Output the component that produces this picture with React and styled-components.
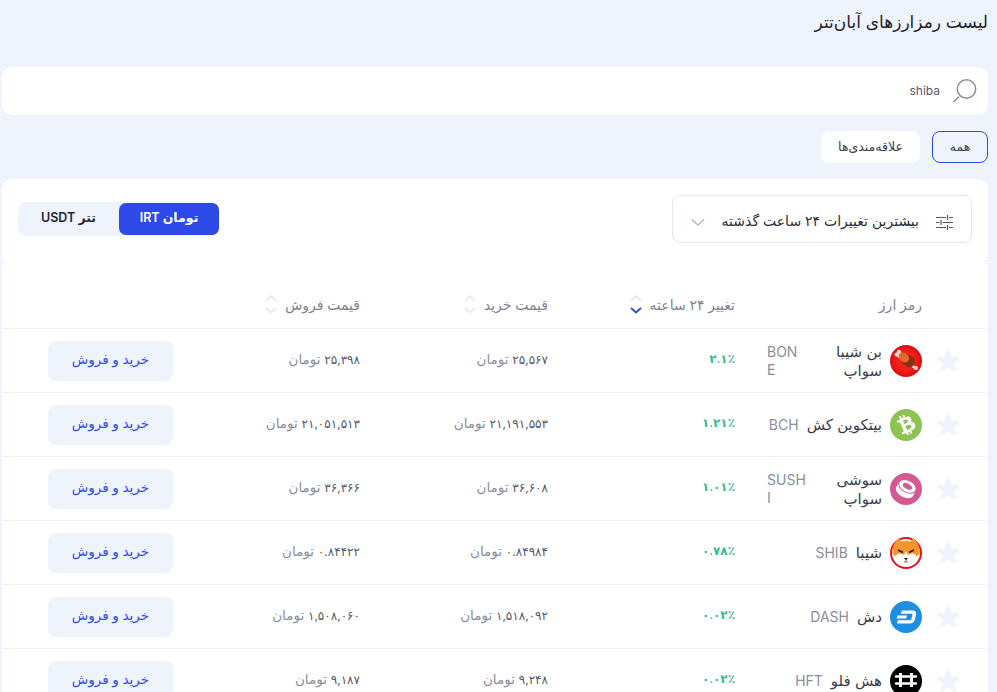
import React from 'react'
import styled, { createGlobalStyle } from 'styled-components'
import { FaBtc } from 'react-icons/fa'

const GlobalStyle = createGlobalStyle`
   html, body {
      margin: 0;
      padding: 0;
      height: 100%;
      overflow: hidden;
      background: #eff3fc;
   }
   body {
      font-family: "Inter", "DejaVu Sans", sans-serif;
      color: #23262f;
   }
`

const Page = styled.div`
   direction: rtl;
   height: 692px;
   overflow: hidden;
   padding: 0 9px 0 2px;
   box-sizing: border-box;
`
const Title = styled.h1`
   margin: 0;
   height: 67px;
   padding-top: 10px;
   box-sizing: border-box;
   font-size: 17px;
   line-height: 24px;
   font-weight: 400;
   color: #1f222b;
`
const SearchBar = styled.div`
   display: flex;
   align-items: center;
   gap: 12px;
   height: 48px;
   padding: 0 10px 0 16px;
   box-sizing: border-box;
   background: #fff;
   border-radius: 10px;

   svg {
      flex: none;
   }
`
const SearchInput = styled.input`
   flex: 1;
   border: 0;
   outline: 0;
   padding: 0;
   margin-bottom: 2px;
   background: transparent;
   direction: rtl;
   font-family: "Inter", sans-serif;
   font-size: 12px;
   color: #555a6b;
`
const Filters = styled.div`
   display: flex;
   gap: 12px;
   margin: 16px 0;
`
const FilterButton = styled.button`
   height: 32px;
   padding: 0 0 2px;
   width: ${(props) => props.$width}px;
   border-radius: 8px;
   border: 1px solid ${(props) => (props.$active ? '#2d4ae8' : '#fff')};
   background: ${(props) => (props.$active ? 'transparent' : '#fff')};
   font-family: inherit;
   font-size: 12.5px;
   color: #3a3e4d;
`
const Toolbar = styled.div`
   display: flex;
   align-items: center;
   justify-content: space-between;
   height: 81px;
   padding: 0 16px 2px;
   box-sizing: border-box;
   background: #fff;
   border-radius: 10px 10px 0 0;
`
const SortSelect = styled.div`
   display: flex;
   align-items: center;
   width: 300px;
   height: 48px;
   padding: 8px 18px 0;
   box-sizing: border-box;
   border: 1px solid #e2e6f2;
   border-radius: 8px;
   font-size: 14px;
   color: #2b2e3a;

   span {
      margin-right: 17px;
      padding-bottom: 4px;
      flex: 1;
   }
`
const Toggle = styled.div`
   display: flex;
   align-items: center;
   width: 201px;
   height: 34px;
   background: #eff3fc;
   border-radius: 8px;
`
const ToggleOption = styled.div`
   display: flex;
   align-items: center;
   justify-content: center;
   width: ${(props) => (props.$active ? 100 : 101)}px;
   height: 32px;
   padding-bottom: 2px;
   box-sizing: border-box;
   border-radius: 7px;
   font-size: 12.5px;
   font-weight: 600;
   background: ${(props) => (props.$active ? '#2d4ae8' : 'transparent')};
   color: ${(props) => (props.$active ? '#fff' : '#23262f')};
`
const Table = styled.div`
   background: #fff;
   border-radius: 6px 6px 0 0;
`
const Row = styled.div`
   display: grid;
   grid-template-columns: 66px 187px 187px 188px 187px 171px;
   align-items: center;
   height: ${(props) => (props.$head ? 69 : 64)}px;
   border-bottom: 1px solid #eef2fb;
   box-sizing: border-box;
`
const HeadCell = styled.div`
   display: flex;
   align-items: center;
   gap: 7px;
   padding-top: 20px;
   font-size: 14px;
   font-weight: 500;
   color: #7f8391;
`
const SortArrows = styled.svg`
   display: block;
   flex: none;
`
const StarCell = styled.div`
   display: flex;
   padding-right: 28px;
`
const NameCell = styled.div`
   display: flex;
   align-items: center;
   gap: 8px;
`
const CoinNames = styled.div`
   display: flex;
   align-items: center;
   gap: 8px;
   width: 115px;
`
const CoinName = styled.div`
   font-size: 15px;
   line-height: 19px;
   color: #3a3d49;
`
const CoinSymbol = styled.div`
   flex: none;
   max-width: ${(props) => props.$maxWidth || 60}px;
   direction: ltr;
   font-size: 14px;
   line-height: 18px;
   color: #8a8e9c;
   word-break: break-all;
`
const Change = styled.div`
   padding-bottom: 4px;
   font-size: 12px;
   font-weight: 600;
   color: #2ec08b;
`
const Price = styled.div`
   padding-bottom: 4px;
   font-size: 13.5px;
   color: #8a8e9c;

   b {
      font-size: 12px;
      font-weight: 400;
      color: #555865;
   }
`
const TradeButton = styled.button`
   width: 125px;
   height: 40px;
   padding: 0 0 4px;
   border: 0;
   border-radius: 8px;
   background: #eff3fc;
   font-family: inherit;
   font-size: 13.5px;
   font-weight: 500;
   color: #2d4ae8;
`
const CoinDisc = styled.div`
   display: flex;
   align-items: center;
   justify-content: center;
   flex: none;
   width: 32px;
   height: 32px;
   border-radius: 50%;
   background: ${(props) => props.$color};

   svg {
      transform: rotate(-24deg);
   }
`

const SearchIcon = () => (
   <svg width="26" height="26" viewBox="0 0 26 26" fill="none" stroke="#8a8e9c">
      <circle cx="14.5" cy="11" r="9.2" strokeWidth="1.5" />
      <path d="M1.5 24 L7 18.6" strokeWidth="1.5" />
   </svg>
)

const SlidersIcon = () => (
   <svg width="17" height="17" viewBox="0 0 17 17" fill="none" stroke="#555865" strokeWidth="1.2">
      <path d="M0 3.5H10M13 3.5H17M11.5 1V6M0 8.5H3.5M6.5 8.5H17M5 6V11M0 13.5H10M13 13.5H17M11.5 11V16" />
   </svg>
)

const ChevronDown = () => (
   <svg width="14" height="9" viewBox="0 0 14 9" fill="none" stroke="#b3b7c4" strokeWidth="1.6">
      <path d="M1 1.5 L7 7 L13 1.5" />
   </svg>
)

const Sorter = ({ active }) => (
   <SortArrows width="14" height="22" viewBox="0 0 14 22" fill="none" strokeWidth="1.3">
      <path d="M2 8 L7 3 L12 8" stroke="#dfe3ee" />
      <path
         d="M2 15 L7 19.5 L12 15"
         stroke={active ? '#2d4ae8' : '#dfe3ee'}
         strokeWidth={active ? 1.8 : 1.3}
      />
   </SortArrows>
)

const Star = () => (
   <svg width="24" height="23" viewBox="0 0 24 23">
      <path
         fill="#eff3fc"
         d="M12 0.5 L15.4 8 L23.6 8.8 L17.4 14.2 L19.2 22.3 L12 18.1 L4.8 22.3 L6.6 14.2 L0.4 8.8 L8.6 8 Z"
         stroke="#eff3fc"
         strokeLinejoin="round"
      />
   </svg>
)

const BoneCoin = () => (
   <svg width="32" height="32" viewBox="0 0 32 32">
      <defs>
         <radialGradient id="boneBg" cx="50%" cy="50%" r="50%">
            <stop offset="55%" stopColor="#f5201c" />
            <stop offset="100%" stopColor="#d80f0f" />
         </radialGradient>
      </defs>
      <circle cx="16" cy="16" r="16" fill="url(#boneBg)" />
      <path d="M7 10 L25 23" stroke="#f2e4dc" strokeWidth="2.4" />
      <circle cx="9" cy="7" r="2.2" fill="#f2e4dc" />
      <circle cx="6.5" cy="9.5" r="2" fill="#f2e4dc" />
      <circle cx="26" cy="23" r="2" fill="#f2e4dc" />
      <path d="M10 13 L15 7.5 L24.5 13 Q26 17 22.5 21.5 Q19 23 17 22 L11 17 Z" fill="#8a2e14" />
      <ellipse cx="14" cy="12.5" rx="4.6" ry="5.6" transform="rotate(-50 14 12.5)" fill="#e8672f" />
   </svg>
)

const BchCoin = () => (
   <CoinDisc $color="#8dc351">
      <FaBtc size={21} color="#fff" />
   </CoinDisc>
)

const SushiCoin = () => (
   <svg width="32" height="32" viewBox="0 0 32 32">
      <circle cx="16" cy="16" r="16" fill="#d65892" />
      <g transform="rotate(28 16 16)">
         <path d="M6.5 13 V19 C6.5 22 11 24.5 16 24.5 C21 24.5 25.5 22 25.5 19 V13 Z" fill="#fff" />
         <ellipse cx="16" cy="13" rx="9.5" ry="6" fill="#fff" stroke="#d65892" strokeWidth="1" />
         <ellipse cx="16" cy="13" rx="5" ry="2.6" fill="#d65892" />
      </g>
   </svg>
)

const ShibCoin = () => (
   <svg width="32" height="32" viewBox="0 0 32 32">
      <circle cx="16" cy="16" r="15" fill="#fff" stroke="#e8101a" strokeWidth="2" />
      <path d="M2.5 17 C2 9 5 3 9 1.5 L11.5 4.5 Q16 3 20.5 4.5 L23 1.5 C27 3 30 9 29.5 17 L24 21 H8 Z" fill="#f5962c" />
      <path d="M6 18 Q10 15 14 18 L16 14 L18 18 Q22 15 26 18 Q25 27 16 29.5 Q7 27 6 18 Z" fill="#fff" />
      <path d="M8 13 L13 15.5 M24 13 L19 15.5" stroke="#2c1a12" strokeWidth="1.8" />
      <path d="M14 21 H18 L16 23.2 Z" fill="#1b1210" />
      <path d="M16 23 V24.5 M14 25 H18" stroke="#7a3b20" strokeWidth="0.8" />
   </svg>
)

const DashCoin = () => (
   <svg width="32" height="32" viewBox="0 0 32 32">
      <circle cx="16" cy="16" r="16" fill="#1c8fe3" />
      <path d="M11.8 9.5 H22.5 Q26.8 9.5 26 13.5 L24.8 18.8 Q24 22.5 19.5 22.5 H7 L7.8 19.2 H20 Q21 19.2 21.3 18.3 L22.5 13.6 Q22.7 12.8 21.7 12.8 H11 Z" fill="#fff" />
      <path d="M7.5 14.6 H17 L16.2 17.4 H6.7 Z" fill="#fff" />
   </svg>
)

const HftCoin = () => (
   <svg width="32" height="32" viewBox="0 0 32 32">
      <circle cx="16" cy="16" r="16" />
      <path d="M6 11.5 H26 M6 18.5 H26" stroke="#fff" strokeWidth="2.4" strokeLinecap="round" fill="none" />
      <path d="M10.5 8 V22 M21.5 8 V22" stroke="#fff" strokeWidth="3" fill="none" />
   </svg>
)

const coins = [
   { name: 'بن شیبا سواپ', symbol: 'BONE', symbolWidth: 38, icon: BoneCoin, change: '۲.۱٪', buy: '۲۵,۵۶۷', sell: '۲۵,۳۹۸' },
   { name: 'بیتکوین کش', symbol: 'BCH', icon: BchCoin, change: '۱.۲۱٪', buy: '۲۱,۱۹۱,۵۵۳', sell: '۲۱,۰۵۱,۵۱۳' },
   { name: 'سوشی سواپ', symbol: 'SUSHI', symbolWidth: 40, icon: SushiCoin, change: '۱.۰۱٪', buy: '۳۶,۶۰۸', sell: '۳۶,۳۶۶' },
   { name: 'شیبا', symbol: 'SHIB', icon: ShibCoin, change: '۰.۷۸٪', buy: '۰.۸۴۹۸۴', sell: '۰.۸۴۴۲۲' },
   { name: 'دش', symbol: 'DASH', icon: DashCoin, change: '۰.۰۲٪', buy: '۱,۵۱۸,۰۹۲', sell: '۱,۵۰۸,۰۶۰' },
   { name: 'هش فلو', symbol: 'HFT', icon: HftCoin, change: '۰.۰۲٪', buy: '۹,۲۴۸', sell: '۹,۱۸۷' },
]

const App = () => {
   return (
      <Page>
         <GlobalStyle />
         <Title>لیست رمزارزهای آبان‌تتر</Title>
         <SearchBar>
            <SearchIcon />
            <SearchInput defaultValue="shiba" />
         </SearchBar>
         <Filters>
            <FilterButton $active $width={56}>همه</FilterButton>
            <FilterButton $width={99}>علاقه‌مندی‌ها</FilterButton>
         </Filters>
         <Toolbar>
            <SortSelect>
               <SlidersIcon />
               <span>بیشترین تغییرات ۲۴ ساعت گذشته</span>
               <ChevronDown />
            </SortSelect>
            <Toggle>
               <ToggleOption $active>تومان IRT</ToggleOption>
               <ToggleOption>تتر USDT</ToggleOption>
            </Toggle>
         </Toolbar>
         <Table>
            <Row $head>
               <div />
               <HeadCell>رمز ارز</HeadCell>
               <HeadCell>تغییر ۲۴ ساعته <Sorter active /></HeadCell>
               <HeadCell>قیمت خرید <Sorter /></HeadCell>
               <HeadCell>قیمت فروش <Sorter /></HeadCell>
               <div />
            </Row>
            {coins.map((coin) => (
               <Row key={coin.symbol}>
                  <StarCell><Star /></StarCell>
                  <NameCell>
                     <coin.icon />
                     <CoinNames>
                        <CoinName>{coin.name}</CoinName>
                        <CoinSymbol $maxWidth={coin.symbolWidth}>{coin.symbol}</CoinSymbol>
                     </CoinNames>
                  </NameCell>
                  <Change>{coin.change}</Change>
                  <Price><b>{coin.buy}</b> تومان</Price>
                  <Price><b>{coin.sell}</b> تومان</Price>
                  <div><TradeButton>خرید و فروش</TradeButton></div>
               </Row>
            ))}
         </Table>
      </Page>
   )
}

export default App
